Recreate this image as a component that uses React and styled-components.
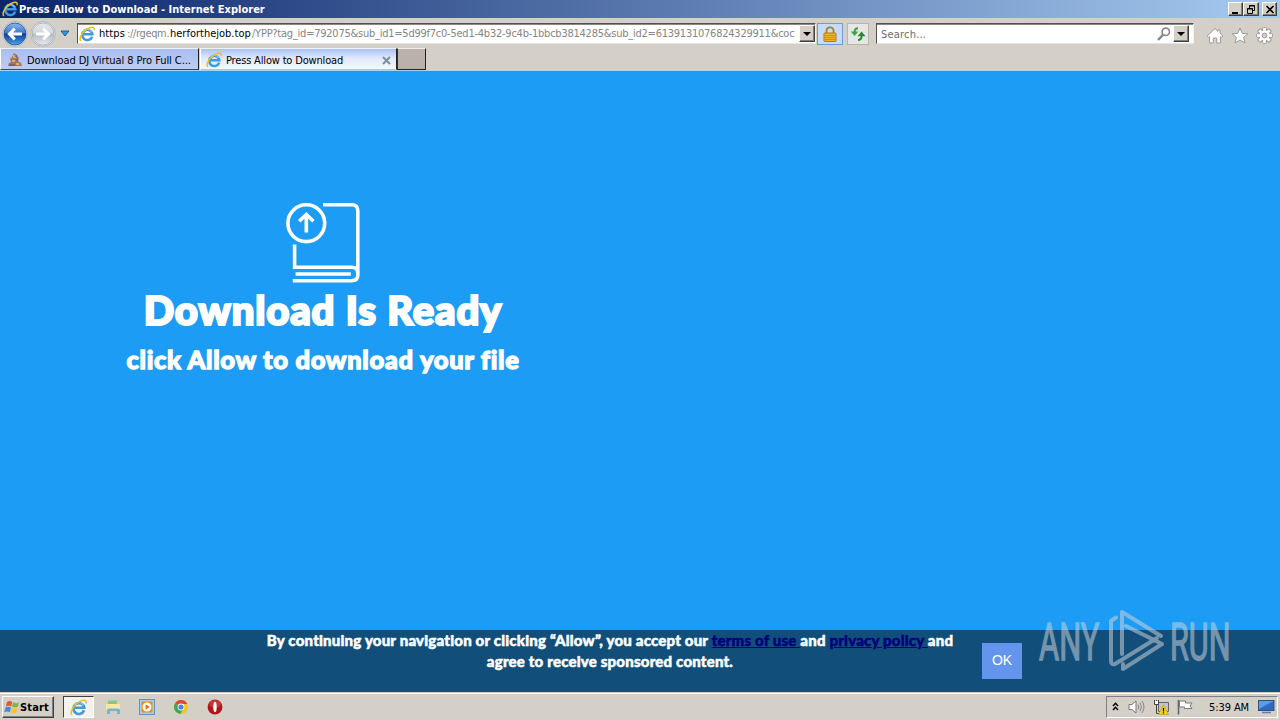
import React from "react";
import styled, { createGlobalStyle, css } from "styled-components";

const Global = createGlobalStyle`
  * { box-sizing: border-box; }
  html, body { margin: 0; padding: 0; overflow: hidden; }
`;

const ui = `"DejaVu Sans Condensed", "DejaVu Sans", sans-serif`;

const raised = css`
  border: 1px solid;
  border-color: #fff #404040 #404040 #fff;
  box-shadow: inset -1px -1px 0 #808080;
  background: #d4d0c8;
`;

const Screen = styled.div`
  width: 1280px;
  height: 720px;
  display: flex;
  flex-direction: column;
  position: relative;
  overflow: hidden;
  background: #d4d0c8;
  font-family: ${ui};
  font-stretch: condensed;
  font-size: 11px;
  color: #000;
  svg { display: block; flex: none; }
`;

/* ---------- title bar ---------- */
const TitleBar = styled.div`
  height: 18px;
  display: flex;
  align-items: center;
  padding: 0 3px 0 2px;
  background: linear-gradient(90deg, #0a246a, #a6caf0);
`;
const Title = styled.div`
  flex: 1;
  margin-left: 1px;
  padding-top: 1px;
  color: #fff;
  font-weight: 700;
  line-height: 18px;
  white-space: nowrap;
  letter-spacing: ${(p) => p.$track}px;
`;
const WinButton = styled.div`
  ${raised}
  width: ${(p) => p.$w || 15}px;
  height: 14px;
  margin-left: ${(p) => p.$gap || 0}px;
  display: flex;
  align-items: center;
  justify-content: center;
`;

/* ---------- navigation bar ---------- */
const NavBar = styled.div`
  height: 30px;
  display: flex;
  align-items: center;
  padding: 1px 7px 0 2px;
`;
const NavButtons = styled.div`
  width: 75px;
  display: flex;
  align-items: center;
  gap: 2px;
`;
const HistoryArrow = styled.div`
  margin-left: 2px;
`;
const Field = styled.div`
  width: ${(p) => p.$w}px;
  height: 21px;
  margin-left: ${(p) => p.$gap || 0}px;
  display: flex;
  align-items: center;
  background: #fff;
  border: 1px solid;
  border-color: #55504a #f4f1ee #e6e2dd #55504a;
  box-shadow: inset 0 1px 0 #8c8880;
  padding: 0 ${(p) => p.$end || 0}px 0 1px;
`;
const Url = styled.div`
  flex: 1;
  display: flex;
  margin-left: 4px;
  padding-top: 1px;
  white-space: nowrap;
  line-height: 18px;
`;
const UrlPart = styled.span`
  width: ${(p) => p.$w}px;
  flex: none;
  color: ${(p) => (p.$strong ? "#000" : "#858585")};
  letter-spacing: ${(p) => p.$track}px;
`;
const DropButton = styled.div`
  ${raised}
  width: 16px;
  height: 17px;
  margin-left: 2px;
  display: flex;
  align-items: center;
  justify-content: center;
`;
const ToolButton = styled.div`
  width: ${(p) => p.$w}px;
  height: 22px;
  margin-left: ${(p) => p.$gap}px;
  display: flex;
  align-items: center;
  justify-content: center;
  border: 1px solid ${(p) => (p.$active ? "#6d9be0" : "#b9b5ae")};
  background: ${(p) => (p.$active ? "#c8dcfa" : "#e6e6e4")};
`;
const Placeholder = styled.div`
  flex: 1;
  padding: 1px 0 0 3px;
  color: #6d6d6d;
  letter-spacing: ${(p) => p.$track}px;
`;
const Commands = styled.div`
  display: flex;
  align-items: center;
  gap: 7px;
  margin: 3px 0 0 auto;
`;

/* ---------- tabs ---------- */
const TabStrip = styled.div`
  height: 23px;
  display: flex;
  align-items: flex-start;
  border-bottom: 1px solid #a9d3ee;
  box-shadow: inset 0 -1px 0 #e9ccb2;
`;
const Tab = styled.div`
  width: ${(p) => p.$w}px;
  height: 22px;
  margin-right: ${(p) => p.$after}px;
  display: flex;
  align-items: center;
  padding: 2px 5px 0 ${(p) => p.$pad}px;
  border: 1px solid;
  border-color: #eef2fc #202020 transparent #fff;
  border-bottom-color: ${(p) => (p.$active ? "transparent" : "#404858")};
  background: ${(p) =>
    p.$active
      ? "linear-gradient(180deg, #a9c2f4 0%, #dfe8fb 45%, #f6f8fe 100%)"
      : "linear-gradient(180deg, #a9bff0 0%, #bccdf4 100%)"};
`;
const TabText = styled.div`
  flex: 1;
  margin-left: 4px;
  white-space: nowrap;
  letter-spacing: ${(p) => p.$track}px;
`;
const NewTab = styled.div`
  width: 29px;
  height: 22px;
  border: 1px solid;
  border-color: #f0eeea #202020 #202020 #303030;
  background: #b9b1aa;
`;

/* ---------- page ---------- */
const Page = styled.div`
  height: 621px;
  display: flex;
  flex-direction: column;
  background: #1c9cf4;
  color: #fff;
  font-family: Lato, sans-serif;
  font-weight: 900;
  font-stretch: normal;
`;
const Hero = styled.div`
  flex: 1;
  width: 646px;
  padding-top: 124px;
  display: flex;
  flex-direction: column;
  align-items: center;
`;
const Heading = styled.h1`
  margin: -9px 0 0;
  font-size: 40px;
  font-weight: 900;
  line-height: 56px;
  white-space: nowrap;
  letter-spacing: ${(p) => p.$track}px;
  -webkit-text-stroke: 2.2px #fff;
`;
const SubHeading = styled.h2`
  margin: 1px 0 0;
  font-size: 25.5px;
  font-weight: 900;
  line-height: 40px;
  white-space: nowrap;
  letter-spacing: ${(p) => p.$track}px;
  -webkit-text-stroke: 1.3px #fff;
`;
const Consent = styled.div`
  height: 62px;
  display: flex;
  align-items: flex-start;
  background: #114f7a;
`;
const ConsentText = styled.div`
  width: 700px;
  margin-left: 260px;
  text-align: center;
  font-size: 15px;
  line-height: 21px;
  white-space: nowrap;
  letter-spacing: ${(p) => p.$track}px;
  -webkit-text-stroke: 0.5px;
`;
const Link = styled.a`
  color: #00007c;
  text-decoration: underline;
`;
const OkButton = styled.div`
  width: 40px;
  height: 36px;
  margin: 13px 0 0 22px;
  background: #6495ed;
  font: 400 14px/35px "Liberation Sans", sans-serif;
  text-align: center;
`;

/* ---------- watermark ---------- */
const Watermark = styled.div`
  position: absolute;
  left: 1039px;
  top: 606px;
  width: 192px;
  height: 70px;
  display: flex;
  justify-content: space-between;
  opacity: 0.52;
  color: #d2d6da;
`;
const MarkWord = styled.div`
  width: 61px;
  font: 400 51px/73px Roboto, sans-serif;
  transform: scaleX(${(p) => p.$scale});
  transform-origin: 0 0;
  white-space: nowrap;
  -webkit-text-stroke: 1.4px;
`;

/* ---------- taskbar ---------- */
const TaskBar = styled.div`
  height: 28px;
  display: flex;
  align-items: center;
  padding: 1px 2px 0;
  border-top: 1px solid #d4d0c8;
  box-shadow: inset 0 1px 0 #fff;
`;
const StartButton = styled.div`
  ${raised}
  width: 52px;
  height: 22px;
  display: flex;
  align-items: center;
  padding-left: 1px;
  font-weight: 700;
  letter-spacing: ${(p) => p.$track}px;
`;
const TaskButton = styled.div`
  width: 31px;
  height: 22px;
  margin: 0 11px 0 9px;
  display: flex;
  align-items: center;
  justify-content: center;
  background: #f4f2ef;
  border: 1px solid;
  border-color: #404040 #fff #fff #404040;
`;
const QuickLaunch = styled.div`
  display: flex;
  gap: 18px;
`;
const Tray = styled.div`
  width: 172px;
  height: 22px;
  margin-left: auto;
  display: flex;
  align-items: center;
  padding: 0 2px 0 5px;
  border: 1px solid;
  border-color: #808080 #fff #fff #808080;
`;
const TrayIcons = styled.div`
  display: flex;
  align-items: center;
  gap: 8px;
`;
const Clock = styled.div`
  flex: 1;
  text-align: right;
  margin-right: 9px;
  letter-spacing: ${(p) => p.$track}px;
  white-space: nowrap;
`;

const IeIcon = ({ size = 16 }) => (
  <svg width={size} height={size} viewBox="0 0 16 16" fill="none">
    <path d="M13.2 10.6A5.1 5.1 0 1 1 13.4 8.2H4.5" stroke="#3f9ade" strokeWidth="2.5" />
    <path d="M12.6 6A5 5 0 0 0 4.2 5.2" stroke="#8ccdf6" strokeWidth="1.1" />
    <path d="M2 15C-.6 13 2.8 6.6 7.6 3.4C12 .4 16 .2 15 4.2" stroke="#f0bd1c" strokeWidth="1.5" />
  </svg>
);
const NavCircle = ({ blue }) => (
  <svg width="26" height="26" viewBox="0 0 26 26">
    <defs>
      <linearGradient id={blue ? "nb" : "nf"} x2="0" y2="1">
        <stop stopColor={blue ? "#8eb6ec" : "#e6e8ec"} />
        <stop offset=".45" stopColor={blue ? "#3f78cc" : "#d3d6dc"} />
        <stop offset=".5" stopColor={blue ? "#0e3c94" : "#b4b9c2"} />
        <stop offset="1" stopColor={blue ? "#4aa4ee" : "#e8eaee"} />
      </linearGradient>
    </defs>
    <circle cx="13" cy="13" r="12.3" fill="#f4f4f4" stroke="#9aa4b4" strokeWidth=".8" />
    <circle cx="13" cy="13" r="11" fill={`url(#${blue ? "nb" : "nf"})`} stroke={blue ? "#234b8e" : "#a6abb4"} strokeWidth=".8" />
    <path
      d="M20 13H8M12.8 7.6L7.4 13L12.8 18.4"
      transform={blue ? undefined : "rotate(180 13 13)"}
      fill="none"
      stroke="#fff"
      strokeWidth="3"
    />
  </svg>
);
const Triangle = ({ w = 8, h = 4, fill = "#000", stroke }) => (
  <svg width={w + 2} height={h + 2} viewBox={`-1 -1 ${w + 2} ${h + 2}`}>
    <path d={`M0 0H${w}L${w / 2} ${h}Z`} fill={fill} stroke={stroke} strokeWidth=".8" />
  </svg>
);
const BookIcon = () => (
  <svg width="96" height="96" viewBox="-0.8 0 96 96" fill="none" stroke="#fff" strokeWidth="3.6">
    <circle cx="30.5" cy="28.2" r="18.4" />
    <path d="M30.5 37.5V20M23.4 26.2L30.5 19.4L37.6 26.2" />
    <path d="M47.2 9.8H76Q82 9.8 82 15.8V80Q82 85.8 75.5 85.8H17M18.8 49.4V72.3H76Q81 72.3 82 77" />
    <path d="M19.8 79H75" />
  </svg>
);

export default function App() {
  return (
    <Screen>
      <Global />
      <TitleBar>
        <IeIcon />
        <Title $track={0.02}>Press Allow to Download - Internet Explorer</Title>
        <WinButton>
          <svg width="10" height="9"><path d="M1 8H7" stroke="#000" strokeWidth="2" /></svg>
        </WinButton>
        <WinButton $w={16}>
          <svg width="10" height="9" fill="none" stroke="#000">
            <path d="M3.5 3V.5H8.5V5.5H7M3 1H9" /><path d="M1.5 3.5H6.5V8.5H1.5ZM1 4H7" />
          </svg>
        </WinButton>
        <WinButton $gap={3}>
          <svg width="10" height="9"><path d="M1.5 1L8.5 8M8.5 1L1.5 8" stroke="#000" strokeWidth="1.6" /></svg>
        </WinButton>
      </TitleBar>

      <NavBar>
        <NavButtons>
          <NavCircle blue />
          <NavCircle />
          <HistoryArrow>
            <Triangle w={8} h={5} fill="#2f9ad8" stroke="#1a4480" />
          </HistoryArrow>
        </NavButtons>
        <Field $w={739}>
          <IeIcon />
          <Url>
            <UrlPart $w={28} $strong $track={0.1}>https</UrlPart>
            <UrlPart $w={43} $track={-0.35}>://rgeqm.</UrlPart>
            <UrlPart $w={82} $strong $track={0}>herforthejob.top</UrlPart>
            <UrlPart $w={545} $track={-0.24}>
              /YPP?tag_id=792075&amp;sub_id1=5d99f7c0-5ed1-4b32-9c4b-1bbcb3814285&amp;sub_id2=6139131076824329911&amp;coc
            </UrlPart>
          </Url>
          <DropButton><Triangle /></DropButton>
        </Field>
        <ToolButton $w={26} $gap={1} $active>
          <svg width="14" height="16" viewBox="0 0 14 16">
            <path d="M3.5 8V4.5a3.5 3.2 0 0 1 7 0V8" fill="none" stroke="#a48428" strokeWidth="1.8" />
            <rect x="1" y="7" width="12" height="8.5" rx=".6" fill="#efb521" stroke="#b07c12" />
            <path d="M2 9.5H12M2 11.5H12M2 13.5H12" stroke="#c48a12" strokeWidth=".8" />
          </svg>
        </ToolButton>
        <ToolButton $w={22} $gap={4}>
          <svg width="16" height="16" viewBox="0 0 16 16" fill="none">
            <path d="M8 2.2Q4.6 2.2 4.6 6" stroke="#3da63a" strokeWidth="2" />
            <path d="M.8 5.4H8.4L4.6 10Z" fill="#3da63a" />
            <path d="M8 14Q11.6 14 11.6 10" stroke="#258a2c" strokeWidth="2" />
            <path d="M7.6 10.2H15.6L11.6 5.6Z" fill="#258a2c" />
          </svg>
        </ToolButton>
        <Field $w={318} $gap={7} $end={4}>
          <Placeholder $track={0.2}>Search...</Placeholder>
          <svg width="14" height="14" viewBox="0 0 14 14" fill="none">
            <circle cx="8.8" cy="4.8" r="3.7" stroke="#84868a" strokeWidth="1.6" />
            <path d="M6.2 7.6L1 13" stroke="#84868a" strokeWidth="2.4" />
          </svg>
          <DropButton><Triangle /></DropButton>
        </Field>
        <Commands>
          <svg width="18" height="17" viewBox="0 0 18 17">
            <path d="M9 1.5L1.2 9L2.5 10.4L3.6 9.6V16H7.3V11H10.7V16H14.4V9.6L15.5 10.4L16.8 9L14 6.3V3H12V4.4Z" fill="#fff" stroke="#9a9a9a" />
          </svg>
          <svg width="18" height="17" viewBox="0 0 18 17">
            <path d="M9 1L11.2 6.4L17 6.8L12.6 10.4L14 16L9 13L4 16L5.4 10.4L1 6.8L6.8 6.4Z" fill="#fff" stroke="#9a9a9a" />
          </svg>
          <svg width="17" height="17" viewBox="-8.5 -8.5 17 17">
            {[0, 45, 90, 135].map((a) => (
              <rect key={a} x="-1.9" y="-7.9" width="3.8" height="15.8" rx=".8" fill="#fff" stroke="#9a9a9a" transform={`rotate(${a})`} />
            ))}
            <circle r="5" fill="#fff" />
            <circle r="2.4" fill="#d4d0c8" stroke="#9a9a9a" />
          </svg>
        </Commands>
      </NavBar>

      <TabStrip>
        <Tab $w={199} $pad={6} $after={1}>
          <svg width="16" height="16" viewBox="0 0 16 16">
            <path d="M7 1L10 3L12 6L11 9L14 11L15 14H1L2 11L4 10L3 7L5 5Z" fill="#a5765c" />
            <path d="M6 3H9V6H6ZM5 8H8V10H5ZM9 11H12V13H9Z" fill="#dba878" />
            <path d="M2 13H8M8 4H10M9 8H11" stroke="#5c5058" />
          </svg>
          <TabText $track={-0.06}>Download DJ Virtual 8 Pro Full C...</TabText>
        </Tab>
        <Tab $w={197} $pad={5} $after={0} $active>
          <IeIcon />
          <TabText $track={-0.17}>Press Allow to Download</TabText>
          <svg width="9" height="9"><path d="M1 1L8 8M8 1L1 8" stroke="#7b8f98" strokeWidth="2" /></svg>
        </Tab>
        <NewTab />
      </TabStrip>

      <Page>
        <Hero>
          <BookIcon />
          <Heading $track={0.88}>Download Is Ready</Heading>
          <SubHeading $track={0.68}>click Allow to download your file</SubHeading>
        </Hero>
        <Consent>
          <ConsentText $track={0.2}>
            By continuing your navigation or clicking “Allow”, you accept our <Link>terms of use </Link>
            and <Link>privacy policy </Link>and
            <br />
            agree to receive sponsored content.
          </ConsentText>
          <OkButton>OK</OkButton>
        </Consent>
      </Page>

      <TaskBar>
        <StartButton $track={0.15}>
          <svg width="16" height="16" viewBox="0 0 16 16">
            <path d="M3 3Q6 1 8.2 3L7.2 7.6Q5 6 1.8 7.6Z" fill="#e8552c" />
            <path d="M9 3.3Q12 5 15 3.2L13.8 7.8Q11 9.2 8 7.8Z" fill="#7cba3c" />
            <path d="M1.5 8.6Q4.5 7 7 8.6L5.8 13.2Q3.4 11.6.3 13.2Z" fill="#3c8ee0" />
            <path d="M7.8 8.9Q10.5 10.4 13.5 9L12.4 13.6Q9.6 15 6.6 13.5Z" fill="#f8c428" />
          </svg>
          Start
        </StartButton>
        <TaskButton><IeIcon size={17} /></TaskButton>
        <QuickLaunch>
          <svg width="16" height="16" viewBox="0 0 16 16">
            <path d="M1 3H6L7 4.5H14V13H1Z" fill="#edcf71" />
            <path d="M3 1.5H12V5H3Z" fill="#8ac783" />
            <path d="M1 5H15V11H1Z" fill="#f8e8a4" />
            <path d="M2 15V11Q2 9.5 4 9.5H13Q15 9.5 15 11V15H12V12H5V15Z" fill="#6db4e4" />
          </svg>
          <svg width="16" height="16" viewBox="0 0 16 16">
            <rect x=".5" y=".5" width="15" height="15" fill="#a9cdf0" stroke="#5c94cc" />
            <rect x="2.5" y="2.5" width="11" height="11" rx="1" fill="#f28a14" />
            <circle cx="8" cy="8" r="4.5" fill="#fff" />
            <path d="M6.5 5.3L10.8 8L6.5 10.7Z" fill="#e87408" />
          </svg>
          <svg width="16" height="16" viewBox="0 0 16 16">
            <circle cx="8" cy="8" r="7" fill="#f6c51e" />
            <path d="M8 8L1.9 4.6A7 7 0 0 1 14.3 5H8Z" fill="#dc4637" />
            <path d="M8 8L1.9 4.6A7 7 0 0 0 7.4 15L10.5 9.5Z" fill="#3fa758" />
            <circle cx="8" cy="8" r="3.4" fill="#fff" />
            <circle cx="8" cy="8" r="2.6" fill="#4684ec" />
          </svg>
          <svg width="16" height="16" viewBox="0 0 16 16">
            <ellipse cx="8" cy="8" rx="7.4" ry="7.6" fill="#b01418" />
            <ellipse cx="8" cy="5" rx="6" ry="4" fill="#d6484c" opacity=".6" />
            <ellipse cx="8" cy="8" rx="1.7" ry="5.2" fill="#fff" />
          </svg>
        </QuickLaunch>
        <Tray>
          <TrayIcons>
            <svg width="8" height="12" fill="none" stroke="#000" strokeWidth="1.5">
              <path d="M1 5L3.5 2.3L6 5M1 9L3.5 6.3L6 9" />
            </svg>
            <svg width="17" height="16" viewBox="0 0 17 16" fill="none">
              <path d="M1 5.5H4L8 2V14L4 10.5H1Z" fill="#fff" stroke="#777" />
              <path d="M10 5.5Q11.6 8 10 10.5M12 3.8Q14.8 8 12 12.2M14 2Q18 8 14 14" stroke="#888" />
            </svg>
            <svg width="16" height="16" viewBox="0 0 16 16" fill="none">
              <path d="M5.5 3.5H15.5V12.5H5.5Z" fill="#c4c4c0" stroke="#666" />
              <path d="M1.5 1V5.5H5.5V1M3.5 5.5V14.5H8M3.5 1V3" stroke="#444" />
              <path d="M2 2H5V5H2Z" fill="#fff" />
              <path d="M10.5 6L15.5 15.4H5.5Z" fill="#f8d41c" stroke="#b8940c" strokeWidth=".6" />
              <path d="M10.5 9V12.4M10.5 13.3V14.5" stroke="#000" strokeWidth="1.2" />
            </svg>
            <svg width="16" height="16" viewBox="0 0 16 16">
              <path d="M1.5 1V15.5" stroke="#666" strokeWidth="1.6" />
              <path d="M2.5 2H8.5V4H15L13 7L15 9.5H7.5V8H2.5Z" fill="#fff" stroke="#777" />
            </svg>
          </TrayIcons>
          <Clock $track={-0.1}>5:39 AM</Clock>
          <svg width="17" height="14" viewBox="0 0 17 14">
            <rect x=".5" y=".5" width="15.5" height="10" fill="#2c6cc4" stroke="#34507c" />
            <path d="M1 1H15.5L1 9Z" fill="#5c9ce4" />
            <path d="M4 12.5H13" stroke="#6c7c94" strokeWidth="1.5" />
          </svg>
        </Tray>
      </TaskBar>

      <Watermark>
        <MarkWord $scale={0.605}>ANY</MarkWord>
        <svg width="62" height="70" viewBox="0 0 62 70" fill="none" stroke="currentColor" strokeWidth="4" strokeLinejoin="round" strokeLinecap="round">
          <path d="M12 11.5L7 15V55Q7 59 11 58L53 32" />
          <path d="M18 48V6L57 30M22 20L58 38L19 63V58" />
        </svg>
        <MarkWord $scale={0.6}>RUN</MarkWord>
      </Watermark>
    </Screen>
  );
}
